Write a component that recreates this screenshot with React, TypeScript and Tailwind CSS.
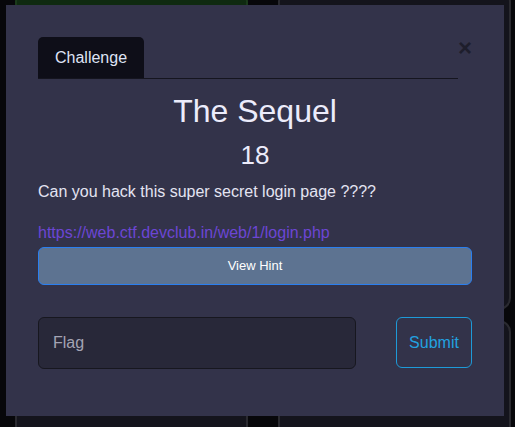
import { useState } from "react";

const cards = [
  "bg-[#0f2a10] border-[#1a3a1a]",
  "bg-[#14141c] border-[#2a2a30]",
  "bg-[#14141c] border-[#2a2a30]",
  "bg-[#14141c] border-[#2a2a30]",
];

export default function App() {
  const [flag, setFlag] = useState("");

  return (
    <div
      className="relative w-[515px] h-[427px] overflow-hidden bg-[#07070a]"
      style={{ fontFamily: '"Liberation Sans", Arial, sans-serif' }}
    >
      {/* page behind the dialog */}
      <div className="grid grid-cols-[233px_233px] gap-x-[30px] gap-y-[10px] px-[15px] -mt-[10px]">
        {cards.map((c, i) => (
          <div key={i} className={`h-[320px] rounded-xl border-2 ${c}`} />
        ))}
      </div>

      {/* dialog */}
      <div className="absolute left-[6px] top-[5px] w-[498px] h-[411px] bg-[#33334a] px-[32px] pt-[32px]">
        <div className="flex items-end">
          <div className="flex-1 flex border-b border-[#15151f]">
            <div className="w-[106px] h-[41px] rounded-t-[5px] bg-[#0e0e18] flex items-center justify-center text-[16px] text-[#dfe3f5]">
              Challenge
            </div>
          </div>
          <button className="w-[14px] self-start -mt-px text-[24px] leading-[24px] font-bold text-[#1e1e2c]">
            ×
          </button>
        </div>

        <h1 className="mt-[14px] text-center text-[32px] leading-[37px] text-[#ececfb]">The Sequel</h1>
        <div className="mt-[10px] text-center text-[26px] leading-[30px] text-[#ececfb]">18</div>
        <p className="mt-[10px] text-[16px] leading-[24px] text-[#e4e4f2]">
          Can you hack this super secret login page ????
        </p>
        <a className="block mt-[17px] text-[16px] leading-[24px] text-[#6c46d4]">
          https://web.ctf.devclub.in/web/1/login.php
        </a>
        <button className="mt-[2px] w-full h-[38px] rounded-[6px] border border-[#2a7ff0] bg-[#5d7391] text-[13px] text-white">
          View Hint
        </button>

        <div className="mt-[32px] flex items-start justify-between">
          <input
            value={flag}
            onChange={(e) => setFlag(e.target.value)}
            placeholder="Flag"
            className="w-[318px] h-[52px] rounded-[6px] border border-[#17171f] bg-[#282839] px-[14px] text-[16px] text-[#e4e4f2] placeholder:text-[#a4a4b4] outline-none"
          />
          <button className="w-[76px] h-[51px] rounded-[6px] border border-[#1e9ad8] text-[16px] text-[#22a2e0]">
            Submit
          </button>
        </div>
      </div>
    </div>
  );
}
